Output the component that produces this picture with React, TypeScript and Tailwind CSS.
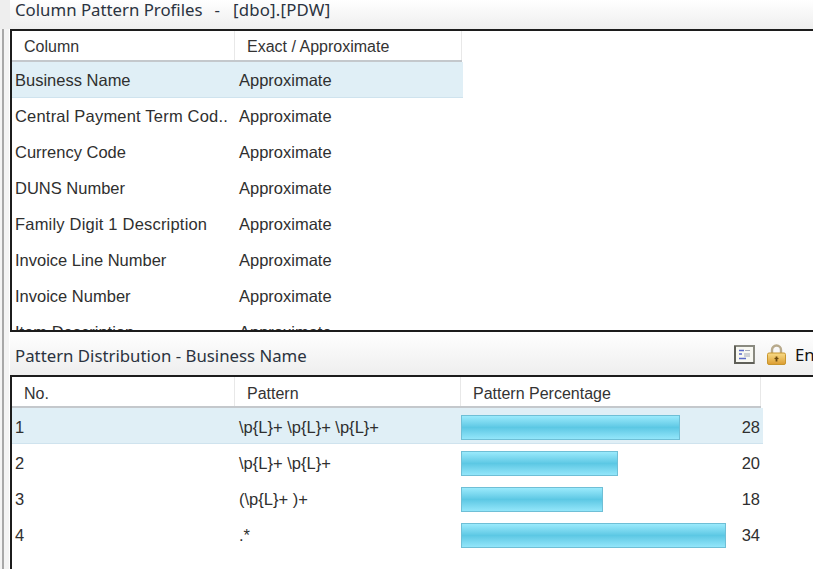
import React from "react";

const columns = [
  "Business Name",
  "Central Payment Term Cod..",
  "Currency Code",
  "DUNS Number",
  "Family Digit 1 Description",
  "Invoice Line Number",
  "Invoice Number",
  "Item Description",
];

const patterns = [
  { no: "1", pattern: "\\p{L}+ \\p{L}+ \\p{L}+", width: 219, pct: 28 },
  { no: "2", pattern: "\\p{L}+ \\p{L}+", width: 157, pct: 20 },
  { no: "3", pattern: "(\\p{L}+ )+", width: 142, pct: 18 },
  { no: "4", pattern: ".*", width: 265, pct: 34 },
];

function TitleBar({ children, right }: { children: React.ReactNode; right?: React.ReactNode }) {
  return (
    <div className="flex items-center justify-between pl-[5px] text-[16.8px] leading-[20px] text-[#2b3340] bg-gradient-to-b from-white to-[#eeeeee]">
      <span className="whitespace-pre">{children}</span>
      {right}
    </div>
  );
}

function Head({ className, children }: { className: string; children: React.ReactNode }) {
  return (
    <div className={`flex items-center pl-3 text-[16px] leading-[20px] text-[#333] border-r border-[#e8e8e8] ${className}`}>{children}</div>
  );
}

export default function App() {
  return (
    <div className="w-[813px] h-[569px] overflow-hidden bg-white flex font-['Liberation_Sans',sans-serif] text-[16.5px] text-[#2f2f2f]">
      <div className="w-[10px] shrink-0 flex flex-col">
        <div className="h-[29px] bg-[#eeeeee]" />
        <div className="flex-1 bg-[#f4f4f4] border-r-[1px] border-white pl-[2px]">
          <div className="h-full w-[2px] bg-[#a8a8a8]" />
        </div>
      </div>
      <div className="flex-1 min-w-0 flex flex-col">
        <TitleBar>
          <span className="h-[29px] pb-[10px] flex items-center font-['Noto_Sans',sans-serif]">
            Column Pattern Profiles
            <span className="ml-[12px]">-</span>
            <span className="ml-[13px] tracking-[0.2px]">[dbo].[PDW]</span>
          </span>
        </TitleBar>

        <div className="h-[303px] border-t-2 border-b-2 border-l-2 border-[#1c1c1c] overflow-hidden">
          <div className="flex h-[31px] w-[450px] border-b-2 border-[#c4c8cc]">
            <Head className="w-[223px] pt-[3px]">Column</Head>
            <Head className="w-[227px] pt-[3px]">Exact / Approximate</Head>
          </div>
          {columns.map((name, i) => (
            <div
              key={name}
              className={`flex items-center h-[36px] w-[451px] whitespace-nowrap ${i === 0 ? "bg-[#e0eff6] border-b border-[#cfe3ee] pt-px" : ""}`}
            >
              <div className={`w-[227px] pl-[3px] overflow-hidden ${name.length > 20 ? "tracking-[0.2px]" : ""}`}>{name}</div>
              <div>Approximate</div>
            </div>
          ))}
        </div>

        <TitleBar
          right={
            <div className="flex items-center mt-[2px] text-[16.8px] text-[#111] w-[79px] shrink-0">
              <svg width="21" height="19" viewBox="0 0 21 19" className="shrink-0">
                <rect x="1" y="1" width="19" height="17" fill="#f8f8f2" stroke="#8a8a80" strokeWidth="2" />
                <path d="M1 1v17h19" fill="none" stroke="#5f5f58" strokeWidth="2" />
                <path d="M5 5.5h5M5 9h3M5 13.5h7" stroke="#5a6ac8" strokeWidth="1.6" />
                <path d="M11 5.5h5M10 9h6M10 11h6" stroke="#a4a8b8" strokeWidth="1" />
              </svg>
              <svg width="19" height="21" viewBox="0 0 19 21" className="shrink-0 ml-[12px]">
                <defs>
                  <linearGradient id="lockBody" x1="0" y1="0" x2="0" y2="1">
                    <stop offset="0" stopColor="#f8dc88" />
                    <stop offset="1" stopColor="#dc9c30" />
                  </linearGradient>
                </defs>
                <path d="M5 10V6a4.5 4.5 0 0 1 9 0v4" fill="none" stroke="#b8aa8c" strokeWidth="2.4" />
                <rect x="0.5" y="9" width="18" height="11.5" rx="1.5" fill="url(#lockBody)" stroke="#c8962e" />
                <path d="M9.5 12.5v5" stroke="#6b4a10" strokeWidth="1.8" />
                <path d="M7.5 14.5h4" stroke="#6b4a10" strokeWidth="1.2" />
              </svg>
              <span className="ml-[9px] font-['Noto_Sans',sans-serif]">En</span>
            </div>
          }
        >
          <span className="h-[43px] pt-[4px] flex items-center font-['Noto_Sans',sans-serif]">Pattern Distribution - Business Name</span>
        </TitleBar>

        <div className="flex-1 border-t-2 border-l-2 border-[#1c1c1c] overflow-hidden">
          <div className="flex h-[31px] w-[749px] border-b-2 border-[#c4c8cc]">
            <Head className="w-[223px] pt-[4px]">No.</Head>
            <Head className="w-[226px] pt-[4px]">Pattern</Head>
            <Head className="w-[300px] pt-[4px]">Pattern Percentage</Head>
          </div>
          {patterns.map((p, i) => (
            <div
              key={p.no}
              className={`flex items-center h-[36px] w-[751px] whitespace-nowrap ${i === 0 ? "bg-[#e0eff6] border-b border-[#cfe3ee] pt-[3px]" : "pt-[2px]"}`}
            >
              <div className="w-[227px] pl-[3px]">{p.no}</div>
              <div className="w-[222px]">{p.pattern}</div>
              <div className="flex-1 flex items-center">
                <div
                  className="h-[25px] border border-[#6fbfd6] bg-gradient-to-b from-[#9aeafc] via-[#5cc8e4] to-[#93e6fa]"
                  style={{ width: p.width }}
                />
              </div>
              <div className="w-[30px] text-right pr-[3px]">{p.pct}</div>
            </div>
          ))}
        </div>
      </div>
    </div>
  );
}
